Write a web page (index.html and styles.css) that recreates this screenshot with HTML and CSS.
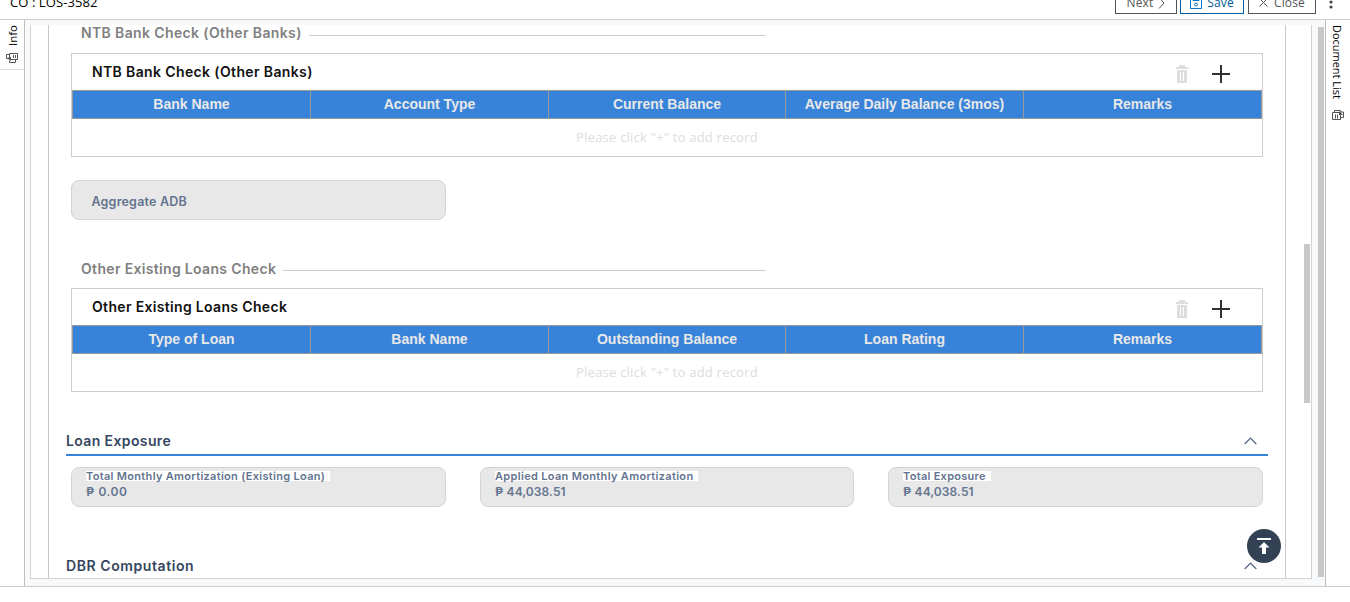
FILE: index.html
```html
<!DOCTYPE html>
<html lang="en">
<head>
<meta charset="utf-8">
<title>LOS-3582</title>
<link rel="stylesheet" href="styles.css">
</head>
<body>
<header class="topbar">
  <div class="case-title">CO : LOS-3582</div>
  <div class="actions">
    <button class="btn btn-next">Next <svg width="7" height="12" viewBox="0 0 7 12"><path d="M1 .5l5 5.500-5 5.500"/></svg></button>
    <button class="btn btn-save"><svg width="12" height="12" viewBox="0 0 12 12"><path d="M.5.5h11v11H.5zM3 .5v3h6v-3"/><circle cx="6" cy="7.500" r="1.500"/></svg>Save</button>
    <button class="btn btn-close"><svg width="9" height="9" viewBox="0 0 9 9"><path d="M.5.5l8 8M8.5.5l-8 8"/></svg>Close</button>
    <svg class="more" width="4" height="14" viewBox="0 0 4 14"><circle cx="2" cy="2" r="1.6"/><circle cx="2" cy="7" r="1.6"/><circle cx="2" cy="12" r="1.6"/></svg>
  </div>
</header>
<div class="workspace">
  <aside class="rail rail-left">
    <div class="rail-tab">
      <span class="rail-label up">Info</span>
      <svg width="12" height="10" viewBox="0 0 12 10"><path d="M3.500.5h8v6h-8zM7.500 2v3M9.500 2v3M3 1.500H.5v4H3M3.500 7.500v2h6V7"/><path class="solid" d="M1 5l4-1v4z"/></svg>
    </div>
  </aside>
  <main class="stage">
    <div class="panel">
      <div class="form">
        <h3 class="group-title t1"><span>NTB Bank Check (Other Banks)</span></h3>
        <section class="grid-box">
          <div class="grid-head"><h4 class="g1">NTB Bank Check (Other Banks)</h4>
            <svg class="trash" width="12" height="18" viewBox="0 0 12 18"><path d="M0 2h3V0h6v2h3v2H0zM1 5h10v13H1z"/><path class="slot" d="M4 7h1v9H4zM7 7h1v9H7z"/></svg>
            <svg class="plus" width="18" height="18" viewBox="0 0 18 18"><path d="M0 9h18M9 0v18"/></svg></div>
          <div class="cols"><div>Bank Name</div><div>Account Type</div><div>Current Balance</div><div>Average Daily Balance (3mos)</div><div>Remarks</div></div>
          <div class="empty">Please click "+" to add record</div>
        </section>
        <div class="field field-empty"><span>Aggregate ADB</span></div>
        <h3 class="group-title t2"><span>Other Existing Loans Check</span></h3>
        <section class="grid-box">
          <div class="grid-head"><h4 class="g2">Other Existing Loans Check</h4>
            <svg class="trash" width="12" height="18" viewBox="0 0 12 18"><path d="M0 2h3V0h6v2h3v2H0zM1 5h10v13H1z"/><path class="slot" d="M4 7h1v9H4zM7 7h1v9H7z"/></svg>
            <svg class="plus" width="18" height="18" viewBox="0 0 18 18"><path d="M0 9h18M9 0v18"/></svg></div>
          <div class="cols"><div>Type of Loan</div><div>Bank Name</div><div>Outstanding Balance</div><div>Loan Rating</div><div>Remarks</div></div>
          <div class="empty">Please click "+" to add record</div>
        </section>
        <div class="section-head"><h2 class="s1">Loan Exposure</h2><svg class="caret" width="13" height="8" viewBox="0 0 13 8"><path d="M.7 7L6.500 1l5.800 6"/></svg></div>
        <div class="fields">
          <div class="field"><label class="l1">Total Monthly Amortization (Existing Loan)</label><span class="value v1">₱ 0.00</span></div>
          <div class="field"><label class="l2">Applied Loan Monthly Amortization</label><span class="value v2">₱ 44,038.51</span></div>
          <div class="field"><label class="l3">Total Exposure</label><span class="value v2">₱ 44,038.51</span></div>
        </div>
        <div class="section-head last"><h2 class="s2">DBR Computation</h2><svg class="caret" width="13" height="8" viewBox="0 0 13 8"><path d="M.7 7L6.500 1l5.800 6"/></svg></div>
      </div>
      <div class="scroll-thumb"></div>
    </div>
    <div class="outer-thumb"></div>
    <button class="to-top"><svg width="14" height="16" viewBox="0 0 14 16"><path d="M0 0h14v2H0zM7 4l5.500 5.500H9V16H5V9.500H1.500z"/></svg></button>
  </main>
  <aside class="rail rail-right">
    <span class="rail-label">Document List</span>
    <svg width="12" height="10" viewBox="0 0 12 10"><path d="M.5 2.500h8v7h-8zM3.500 4.500v4M5.500 4.500v4M2.500 2.500v-2h6l.5 1.500h2.500v5.500H9"/><path class="solid" d="M7 1l4 4H7z"/></svg>
  </aside>
</div>
</body>
</html>
```

FILE: styles.css
```css
* { box-sizing: border-box; }
body { margin: 0; height: 602px; overflow: hidden; background: #fff; font-family: Inter, "Liberation Sans", sans-serif; }
h2, h3, h4 { margin: 0; }
svg { fill: none; stroke: currentColor; flex: none; display: block; }
.topbar { height: 20px; border-bottom: 1px solid #ccc; display: flex; justify-content: space-between; align-items: flex-end; overflow: hidden; font-family: "Open Sans", sans-serif; }
.case-title { font-size: 13px; line-height: 18px; padding: 0 0 8px 10px; color: #000; letter-spacing: .08px; }
.actions { display: flex; align-items: flex-end; gap: 3px; padding: 0 17px 5px 0; }
.btn { height: 24px; border: 1px solid #555; background: #fff; color: #555; font: 12px/16px "Open Sans", sans-serif; display: flex; align-items: center; justify-content: center; gap: 5px; padding: 1px 0 0; letter-spacing: .15px; }
.btn-next { width: 62px; }
.btn-save { width: 64px; color: #005b9f; border-color: #005b9f; }
.btn-save svg { color: #0b74c4; }
.btn-close { width: 68px; margin-left: 1px; gap: 6px; }
.more { fill: #444; stroke: none; margin-left: 10px; align-self: flex-end; margin-bottom: 5px; }
.workspace { height: 567px; display: flex; border-bottom: 1px solid #ccc; }
.rail { width: 25px; color: #000; }
.rail svg { color: #555; }
.rail .solid { fill: #555; stroke: none; }
.rail-left { border-right: 1px solid #bfbfbf; }
.rail-tab { height: 50px; border-bottom: 1px solid #ddd; display: flex; flex-direction: column; align-items: center; padding-top: 5px; }
.rail-tab svg { margin-top: auto; margin-bottom: 6px; }
.rail-label { writing-mode: vertical-rl; font: 11.500px/16px "Open Sans", sans-serif; }
.up { transform: rotate(180deg); position: relative; left: 1px; }
.rail-right { border-left: 1px solid #bfbfbf; display: flex; flex-direction: column; align-items: center; padding-top: 5px; }
.rail-right .rail-label { height: 75px; white-space: nowrap; margin-bottom: 10px; margin-right: 2px; font-size: 11px; letter-spacing: -.03px; }
.stage { flex: 1; position: relative; background: #f8f9fb; padding: 5px 0 7px 5px; }
.panel { position: relative; width: 1282px; height: 554px; background: #fff; border: 1px solid #d2d2d4; border-top: 0; padding-left: 17px; overflow: hidden; }
.form { width: 1238px; height: 553px; border: 1px solid #c8c8c8; border-width: 0 1px; padding: 0 22px; overflow: hidden; }
.scroll-thumb { position: absolute; right: 1px; top: 219px; width: 6px; height: 159px; background: #c8c8c8; }
.outer-thumb { position: absolute; right: 1px; top: 7px; width: 6px; height: 550px; background: #c8c8c8; }
.group-title { width: 695px; height: 18px; padding-left: 10px; display: flex; align-items: center; gap: 7px; font-size: 14px; font-weight: 600; line-height: 18px; color: #808080; }
.group-title::after { content: ""; flex: 1; height: 1px; background: #ccc; margin-top: 3px; }
.group-title span { white-space: nowrap; }
.t1 span { margin-top: -2px; }
.t1, .g1 { letter-spacing: .37px; }
.t2, .g2 { letter-spacing: .33px; }
.t2 { margin-top: 40px; }
.grid-box { border: 1px solid #ccc; height: 104px; margin-top: 10px; }
.grid-head { height: 36px; display: flex; align-items: center; padding: 0 32px 0 20px; color: #111; }
.grid-head h4 { flex: 1; font-size: 14px; font-weight: 600; margin-top: -2px; }
.trash { margin: 4px 24px 0 0; fill: #ddd; stroke: none; }
.trash .slot { fill: #fff; }
.plus { margin-top: 4px; color: #303030; stroke-width: 2; }
.cols { height: 29px; display: grid; grid-template-columns: 238px 238px 237px 238px 1fr; border: 1px solid #999; background: #3883da; color: #e8e8e8; font: bold 14px/26px "Liberation Sans", sans-serif; text-align: center; }
.cols div { border-right: 1px solid #999; white-space: nowrap; }
.cols div:last-child { border: 0; }
.empty { text-align: center; color: #ddd; font: 13px/36px "Open Sans", sans-serif; letter-spacing: .22px; }
.field { height: 40px; border: 1px solid #d4d4d4; border-radius: 8px; background: #e8e8e8; color: #64748f; padding: 3px 14px; display: flex; flex-direction: column; align-items: flex-start; font-weight: 600; }
.field-empty { width: 375px; margin-top: 23px; padding: 12px 19.500px; font-size: 12.500px; line-height: 17px; letter-spacing: .2px; }
.field label { background: #fff; height: 10px; line-height: 10px; font-size: 11px; padding-right: 5px; white-space: nowrap; }
.l1 { letter-spacing: .31px; }
.l2 { letter-spacing: .33px; }
.l3 { letter-spacing: .28px; }
.value { font-size: 12px; line-height: 16px; margin-top: 3px; }
.v1 { letter-spacing: .5px; }
.v2 { letter-spacing: .08px; }
.section-head { margin: 39px -5px 0; height: 25px; border-bottom: 2px solid #3883da; display: flex; justify-content: space-between; padding: 0 11px 0 0; color: #35465f; }
.section-head h2 { font-size: 14px; line-height: 20px; font-weight: 600; }
.s1 { letter-spacing: .38px; }
.s2 { letter-spacing: .58px; }
.caret { margin-top: 6px; color: #52647f; stroke-width: 1.200; }
.fields { display: grid; grid-template-columns: 375px 374px 375px; column-gap: 34px; margin-top: 11px; }
.last { margin-top: 49px; }
.to-top { position: absolute; left: 1222px; top: 509px; width: 34px; height: 34px; border: 0; border-radius: 50%; background: #334155; padding: 0; display: flex; align-items: center; justify-content: center; }
.to-top svg { fill: #fff; stroke: none; }
```
